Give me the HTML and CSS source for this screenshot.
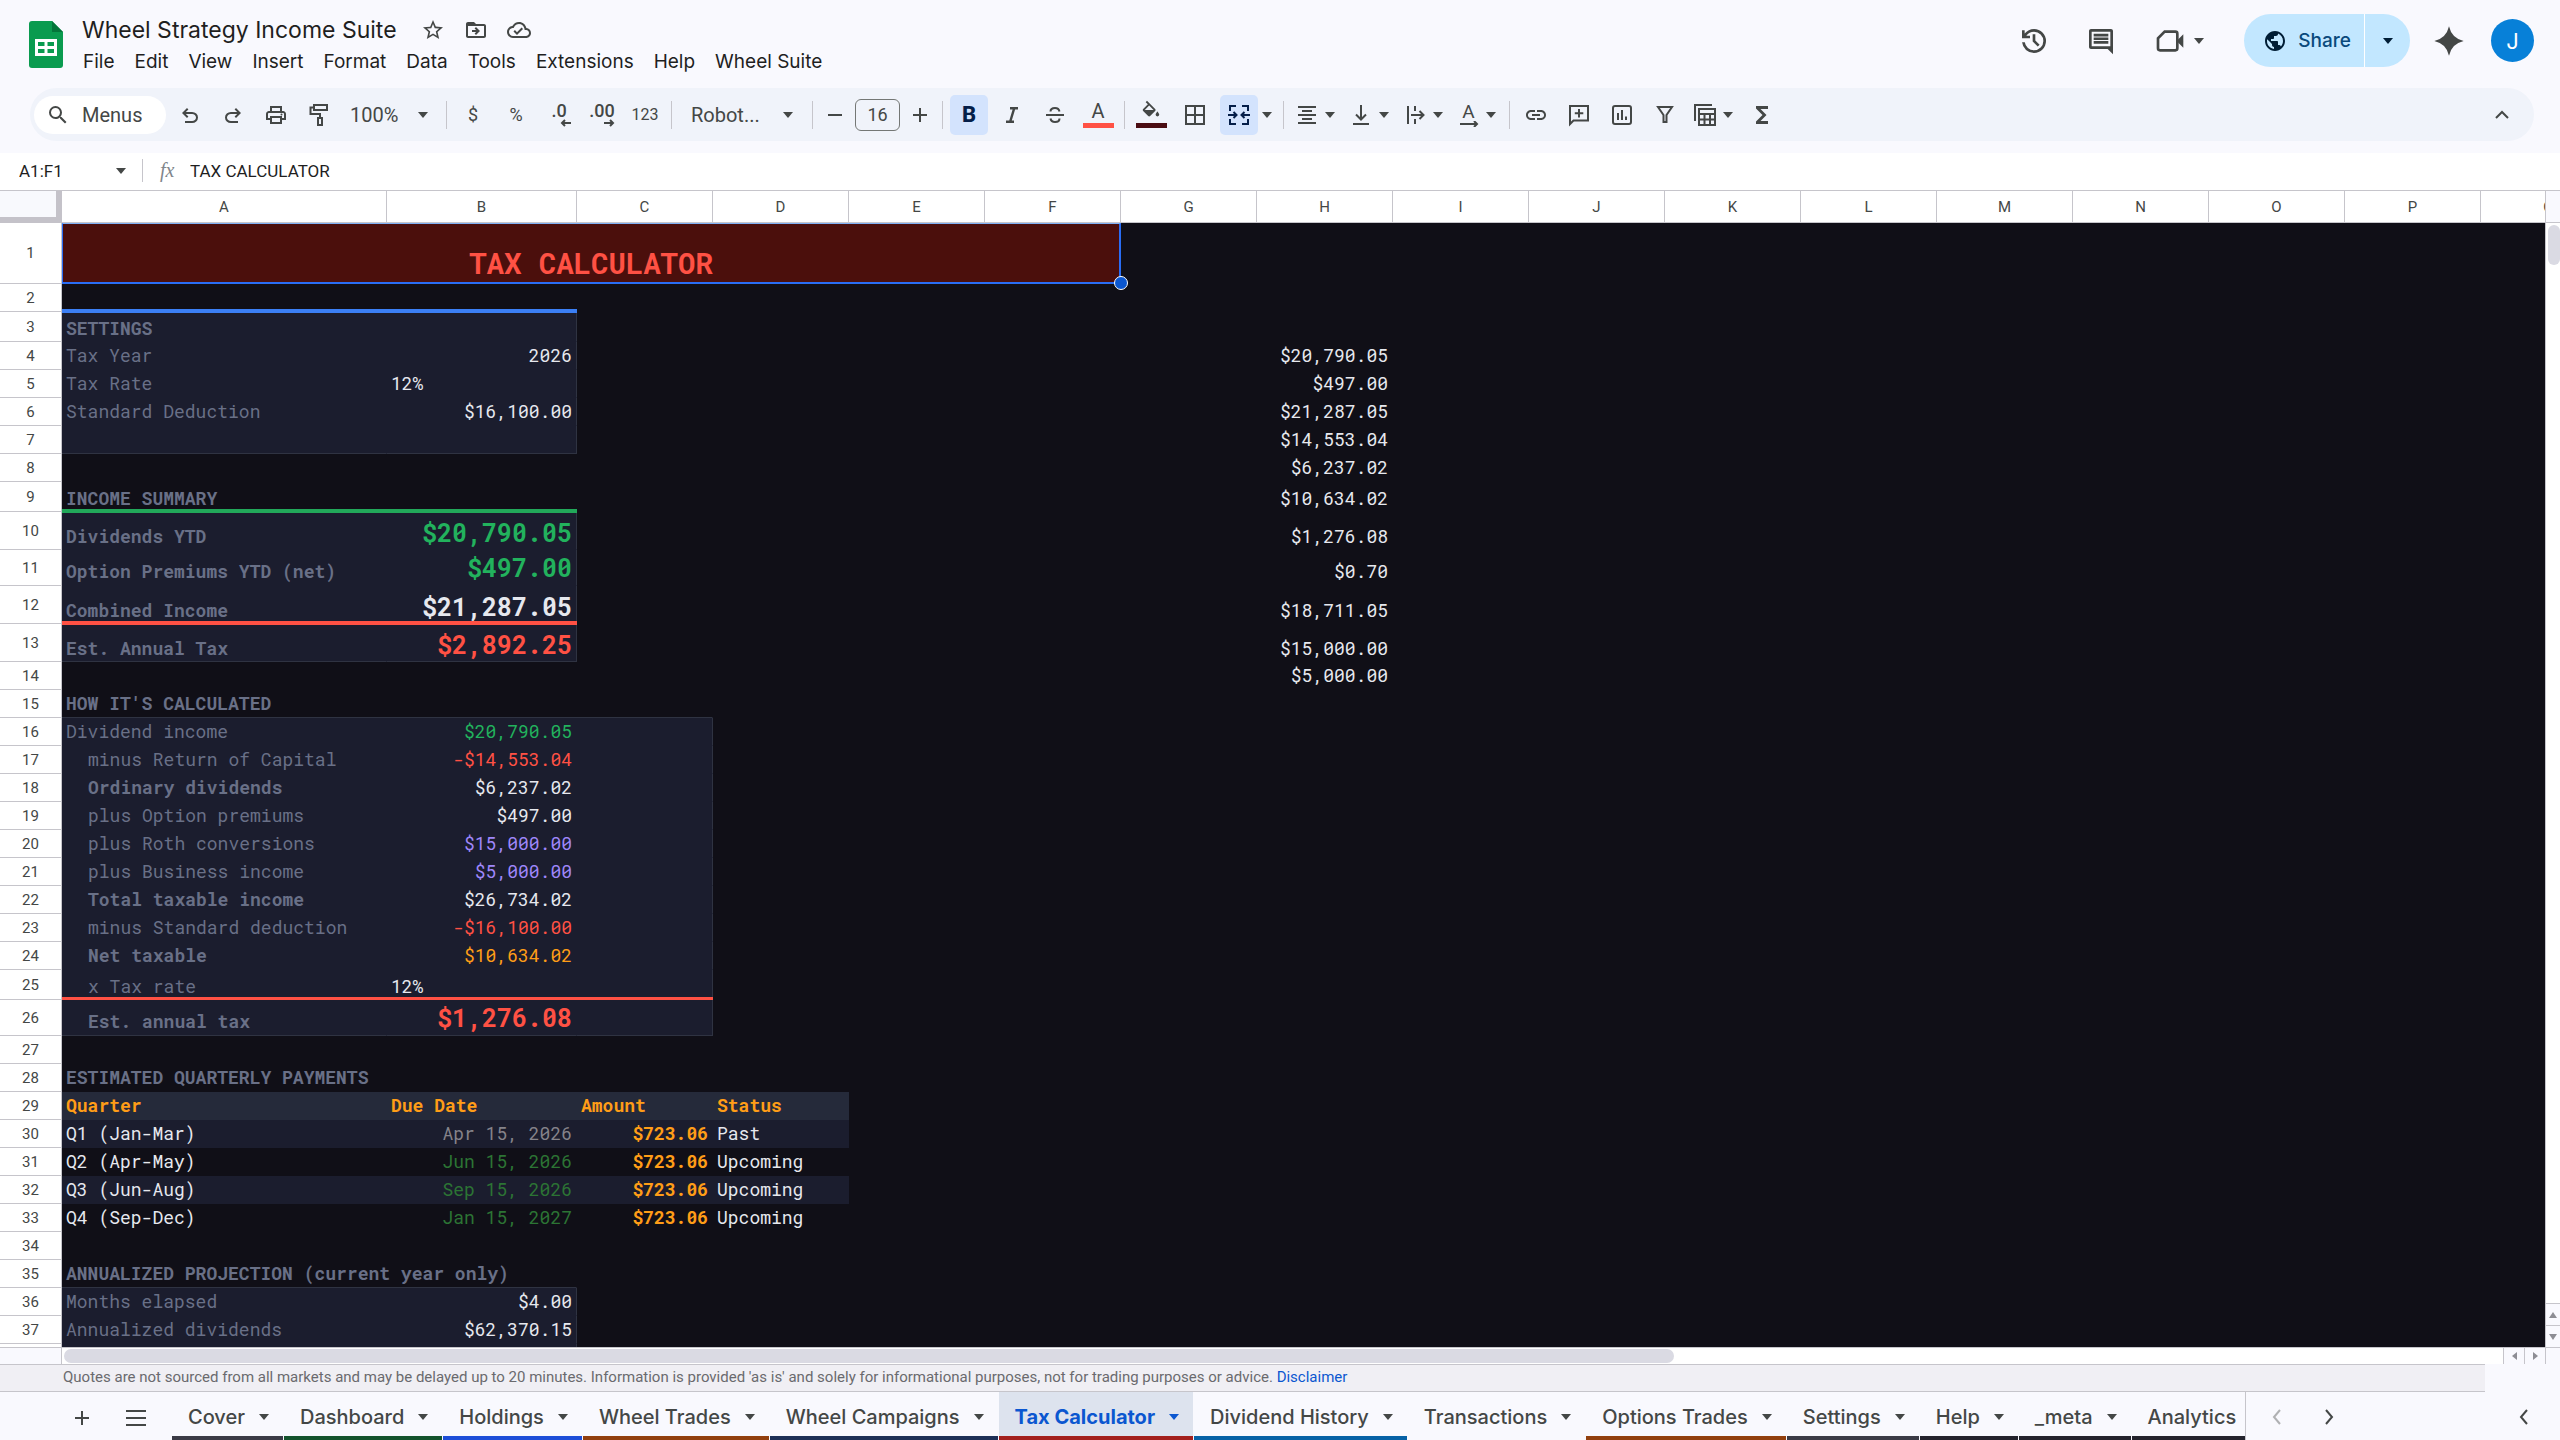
FILE: index.html
```html
<!DOCTYPE html>
<html lang="en">
<head>
<meta charset="utf-8">
<meta name="viewport" content="width=device-width, initial-scale=1">
<title>Wheel Strategy Income Suite</title>
<link rel="stylesheet" href="styles.css">
</head>
<body>
<header class="topbar">
  <svg class="logo" viewBox="0 0 34 47" aria-hidden="true"><path fill="#0a9b4f" d="M3 0h20l11 11v33a3 3 0 0 1-3 3H3a3 3 0 0 1-3-3V3a3 3 0 0 1 3-3z"/><path fill="#04753a" d="M23 0l11 11H23z"/><path fill="#fff" fill-rule="evenodd" d="M6 18h22v17H6zM9 21v4h6.500v-4zm9.500 0v4H25v-4zM9 28v4h6.500v-4zm9.500 0v4H25v-4z"/></svg>
  <div class="doc">
    <div class="doc-title">
      <h1>Wheel Strategy Income Suite</h1>
      <button class="mini" aria-label="Star"><svg viewBox="0 0 24 24"><path d="M22 9.240l-7.190-.620L12 2 9.190 8.630 2 9.240l5.460 4.730L5.820 21 12 17.270 18.180 21l-1.630-7.030L22 9.240zM12 15.400l-3.760 2.270 1-4.280-3.320-2.880 4.380-.380L12 6.100l1.710 4.040 4.380.380-3.320 2.880 1 4.280L12 15.400z"/></svg></button>
      <button class="mini" aria-label="Move"><svg viewBox="0 0 24 24"><path d="M20 6h-8l-2-2H4c-1.100 0-2 .9-2 2v12c0 1.100.9 2 2 2h16c1.100 0 2-.9 2-2V8c0-1.100-.9-2-2-2zm0 12H4V8h16v10z"/><path d="M12.160 12H8v2h4.160l-1.590 1.590L11.990 17 16 13.010 11.990 9l-1.410 1.410L12.160 12z"/></svg></button>
      <button class="mini" aria-label="Saved to Drive"><svg viewBox="0 0 24 24"><path d="M19.350 10.040C18.670 6.590 15.640 4 12 4 9.110 4 6.610 5.640 5.360 8.040 2.340 8.360 0 10.910 0 14c0 3.310 2.690 6 6 6h13c2.760 0 5-2.240 5-5 0-2.640-2.050-4.780-4.650-4.960zM19 18H6c-2.210 0-4-1.790-4-4 0-2.050 1.530-3.760 3.560-3.970l1.070-.11.5-.95C8.080 7.140 9.940 6 12 6c2.620 0 4.880 1.860 5.390 4.430l.3 1.500 1.530.110c1.560.1 2.780 1.410 2.780 2.960 0 1.650-1.350 3-3 3zm-9-3.820l-2.090-2.090L6.500 13.500 10 17l6.010-6.010-1.410-1.410z"/></svg></button>
    </div>
    <nav class="menus">
      <button>File</button><button>Edit</button><button>View</button><button>Insert</button><button>Format</button><button>Data</button><button>Tools</button><button>Extensions</button><button>Help</button><button>Wheel Suite</button>
    </nav>
  </div>
  <div class="actions">
    <button class="act" aria-label="Version history"><svg viewBox="0 0 24 24"><path d="M12 21q-3.450 0-6.012-2.287T3.050 13H5.100q.35 2.600 2.313 4.300T12 19q2.925 0 4.963-2.037T19 12t-2.037-4.962T12 5q-1.725 0-3.225.8T6.250 8H9v2H3V4h2v2.350q1.275-1.600 3.113-2.475T12 3q1.875 0 3.513.713t2.850 1.924 1.925 2.850T21 12t-.712 3.513-1.925 2.850-2.850 1.925T12 21m2.800-4.800L11 12.400V7h2v4.600l3.200 3.200z"/></svg></button>
    <button class="act" aria-label="Comments"><svg viewBox="0 0 24 24"><path d="M21 4.500c0-.8-.7-1.500-1.500-1.500h-15C3.700 3 3 3.700 3 4.500v12c0 .8.7 1.500 1.500 1.500H17l4 4zM19 5v11H5V5zM6.500 12h11v2h-11zm0-2.700h11v2h-11zm0-2.700h11v2h-11z"/></svg></button>
    <button class="act meet" aria-label="Meet"><svg viewBox="0 0 24 24"><path fill="none" stroke="currentColor" stroke-width="2" d="M8 5h8a1.500 1.500 0 0 1 1.500 1.500v11A1.500 1.500 0 0 1 16 19H4.500A1.500 1.500 0 0 1 3 17.500V10z"/><path d="M17.500 11.500L22 7v10l-4.500-4.500z"/></svg><i class="caret"></i></button>
    <div class="share">
      <button class="share-main"><svg viewBox="0 0 24 24"><path d="M12 2C6.480 2 2 6.480 2 12s4.480 10 10 10 10-4.480 10-10S17.520 2 12 2zm-1 17.930c-3.950-.49-7-3.850-7-7.930 0-.62.080-1.210.210-1.790L9 15v1c0 1.100.9 2 2 2v1.930zm6.900-2.540c-.26-.81-1-1.390-1.900-1.390h-1v-3c0-.55-.45-1-1-1H8v-2h2c.55 0 1-.45 1-1V7h2c1.100 0 2-.9 2-2v-.41c2.930 1.190 5 4.060 5 7.410 0 2.080-.8 3.970-2.100 5.390z"/></svg>Share</button>
      <button class="share-more" aria-label="Share options"><i class="caret"></i></button>
    </div>
    <button class="act spark" aria-label="Gemini"><svg viewBox="0 0 24 24"><path d="M12 1Q14 10 23 12 14 14 12 23 10 14 1 12 10 10 12 1z"/></svg></button>
    <button class="avatar">J</button>
  </div>
</header>

<div class="toolbar" role="toolbar">
  <label class="search"><svg viewBox="0 0 24 24"><path d="M15.500 14h-.79l-.28-.27A6.471 6.471 0 0 0 16 9.500 6.500 6.500 0 1 0 9.500 16c1.610 0 3.090-.59 4.230-1.570l.27.280v.79l5 4.990L20.490 19l-4.990-5zm-6 0C7.010 14 5 11.990 5 9.500S7.010 5 9.500 5 14 7.010 14 9.500 11.990 14 9.500 14z"/></svg><input type="text" placeholder="Menus" aria-label="Search menus"></label>
  <div class="group">
    <button aria-label="Undo"><svg viewBox="0 0 24 24"><path d="M7 20v-2h7.100q1.575 0 2.738-1T18 14.500 16.838 12 14.100 11H7.800l2.600 2.600L9 15l-5-5 5-5 1.400 1.400L7.800 9h6.300q2.425 0 4.163 1.575T20 14.500t-1.737 3.925T14.100 20z"/></svg></button>
    <button aria-label="Redo"><svg viewBox="0 0 24 24"><path d="M9.900 20q-2.425 0-4.163-1.575T4 14.500t1.737-3.925T9.900 9h6.300l-2.600-2.600L15 5l5 5-5 5-1.400-1.400 2.600-2.600H9.900q-1.575 0-2.738 1T6 14.500t1.163 2.500T9.900 18H17v2z"/></svg></button>
    <button aria-label="Print"><svg viewBox="0 0 24 24"><path d="M19 8h-1V3H6v5H5c-1.660 0-3 1.340-3 3v6h4v4h12v-4h4v-6c0-1.660-1.340-3-3-3zM8 5h8v3H8V5zm8 12v2H8v-4h8v2zm2-2v-2H6v2H4v-4c0-.55.45-1 1-1h14c.55 0 1 .45 1 1v4h-2z"/><circle cx="17.500" cy="11.500" r="1"/></svg></button>
    <button aria-label="Paint format"><svg class="line" viewBox="0 0 24 24"><path d="M7 2h13v5H7zM7 4.500H3.500V11H13v4M11 15h4v7h-4z"/></svg></button>
  </div>
  <label class="pick zoom"><select aria-label="Zoom"><option>100%</option></select><i class="caret"></i></label>
  <span class="sep"></span>
  <div class="group">
    <button class="txt" aria-label="Currency">$</button>
    <button class="txt" aria-label="Percent">%</button>
    <button class="txt dec" aria-label="Decrease decimals">.0<svg class="line" viewBox="0 0 12 8"><path d="M11 4H2M5 1L2 4l3 3"/></svg></button>
    <button class="txt dec" aria-label="Increase decimals">.00<svg class="line" viewBox="0 0 12 8"><path d="M1 4h9M7 1l3 3-3 3"/></svg></button>
    <button class="txt small" aria-label="More formats">123</button>
  </div>
  <span class="sep"></span>
  <label class="pick font"><select aria-label="Font"><option>Robot...</option></select><i class="caret"></i></label>
  <span class="sep"></span>
  <div class="group">
    <button class="step" aria-label="Smaller"><svg viewBox="0 0 24 24"><path d="M5 11h14v2H5z"/></svg></button>
    <input class="size" type="text" value="16" aria-label="Font size">
    <button class="step" aria-label="Larger"><svg viewBox="0 0 24 24"><path d="M19 13h-6v6h-2v-6H5v-2h6V5h2v6h6z"/></svg></button>
  </div>
  <span class="sep"></span>
  <div class="group">
    <button class="txt bold on" aria-label="Bold">B</button>
    <button aria-label="Italic"><svg viewBox="0 0 24 24"><path d="M10 4v2.500h2.600l-3.300 11H6V20h8v-2.500h-2.200l3.300-11H18V4z"/></svg></button>
    <button aria-label="Strikethrough"><svg class="line" viewBox="0 0 24 24"><path d="M3 12h18M16.500 8.500C16 6 14 5 12 5S7.500 6 7.500 8.500M7.500 15.500C8 18 10 19 12 19s4.500-1 4.500-3.500"/></svg></button>
    <button class="swatch red" aria-label="Text color">A</button>
  </div>
  <span class="sep"></span>
  <div class="group wide">
    <button class="swatch maroon" aria-label="Fill color"><svg viewBox="0 0 24 24"><path d="M16.560 10.940L7.620 2 6.210 3.410l2.380 2.380-5.150 5.150c-.59.59-.59 1.540 0 2.120l5.500 5.500c.29.290.68.440 1.060.440s.77-.15 1.060-.44l5.500-5.500c.59-.58.59-1.530 0-2.120zM19 13.500s-2 2.170-2 3.500a2 2 0 0 0 4 0c0-1.330-2-3.500-2-3.500zM10 7.210L5.210 12h9.580z" fill-rule="evenodd"/></svg></button>
    <button aria-label="Borders"><svg viewBox="0 0 24 24"><path d="M2 2v20h20V2zm9 18H4v-7h7zm0-9H4V4h7zm9 9h-7v-7h7zm0-9h-7V4h7z"/></svg></button>
    <button class="on" aria-label="Merge cells"><svg class="line" viewBox="0 0 24 24"><path d="M9 3H3v5M3 16v5h6M15 3h6v5M21 16v5h-6M1 12h8M6.500 9l3 3-3 3M23 12h-8M17.500 9l-3 3 3 3"/></svg></button>
  </div>
  <button class="only-caret" aria-label="Merge type"><i class="caret"></i></button>
  <span class="sep"></span>
  <div class="group">
    <button class="drop" aria-label="Horizontal align"><svg class="line" viewBox="0 0 24 24"><path d="M3 4h18M7 8h10M3 12h18M7 16h10M3 20h18"/></svg><i class="caret"></i></button>
    <button class="drop" aria-label="Vertical align"><svg class="line" viewBox="0 0 24 24"><path d="M12 2v14M7 11.500l5 5 5-5M4 21h16"/></svg><i class="caret"></i></button>
    <button class="drop" aria-label="Text wrapping"><svg class="line" viewBox="0 0 24 24"><path d="M5 3v18M12 3v5M12 16v5M8 12h12M16.500 8l4 4-4 4"/></svg><i class="caret"></i></button>
    <button class="drop rotate" aria-label="Text rotation"><span>A<svg class="line" viewBox="0 0 20 6"><path d="M1 3h17M15 0l3 3-3 3"/></svg></span><i class="caret"></i></button>
  </div>
  <span class="sep"></span>
  <div class="group">
    <button aria-label="Link"><svg viewBox="0 0 24 24"><path d="M3.900 12c0-1.710 1.390-3.100 3.100-3.100h4V7H7c-2.760 0-5 2.240-5 5s2.240 5 5 5h4v-1.900H7c-1.710 0-3.100-1.390-3.100-3.100zM8 13h8v-2H8v2zm9-6h-4v1.900h4c1.710 0 3.100 1.390 3.100 3.100s-1.390 3.100-3.100 3.100h-4V17h4c2.760 0 5-2.240 5-5s-2.240-5-5-5z"/></svg></button>
    <button aria-label="Insert comment"><svg class="line" viewBox="0 0 24 24"><path d="M3 21V3h18v14.500H6.500zM12 6v8.500M7.800 10.200h8.500"/></svg></button>
    <button aria-label="Insert chart"><svg class="line" viewBox="0 0 24 24"><path d="M5 3h14a2 2 0 0 1 2 2v14a2 2 0 0 1-2 2H5a2 2 0 0 1-2-2V5a2 2 0 0 1 2-2zM8 10v7M12 7v10M16 13.500V17"/></svg></button>
    <button aria-label="Filter"><svg class="line" viewBox="0 0 24 24"><path d="M5 4h14l-5.500 8v7h-3v-7z"/></svg></button>
    <button class="drop" aria-label="Table views"><svg class="line" viewBox="0 0 24 24"><path d="M6 6h16v16H6zM6 11h16M6 16.500h16M11.500 11v11M17 11v11M2 18V2h17"/></svg><i class="caret"></i></button>
    <button aria-label="Functions"><svg viewBox="0 0 24 24"><path d="M18 3H6v2.500l6.500 6.500L6 18.500V21h12v-3h-7.500l6-6-6-6H18z"/></svg></button>
  </div>
  <button class="collapse" aria-label="Hide menus"><svg class="line" viewBox="0 0 24 24"><path d="M6 15l6-6 6 6"/></svg></button>
</div>

<div class="formula">
  <input class="name" type="text" value="A1:F1" aria-label="Name box">
  <button class="name-more" aria-label="Named ranges"><i class="caret"></i></button>
  <span class="sep"></span>
  <span class="fx">fx</span>
  <input class="fbox" type="text" value="TAX CALCULATOR" aria-label="Formula">
</div>

<main class="sheet">
  <div class="canvas">
  <table class="grid">
    <thead>
      <tr><th class="corner"></th><th class="wa">A</th><th class="wb">B</th><th>C</th><th>D</th><th>E</th><th>F</th><th>G</th><th>H</th><th>I</th><th>J</th><th>K</th><th>L</th><th>M</th><th>N</th><th>O</th><th>P</th><th>Q</th></tr>
    </thead>
    <tbody>
      <tr class="h-title"><th>1</th><td class="title" colspan="6">TAX CALCULATOR<span class="handle"></span></td><td colspan="11"></td></tr>
      <tr><th>2</th><td class="rule blue" colspan="2"></td><td colspan="15"></td></tr>
      <tr class="h-rule"><th>3</th><td class="p head after blue">SETTINGS</td><td class="p er after blue"></td><td colspan="15"></td></tr>
      <tr><th>4</th><td class="p lab">Tax Year</td><td class="p er num">2026</td><td colspan="5"></td><td class="num">$20,790.05</td><td colspan="9"></td></tr>
      <tr><th>5</th><td class="p lab">Tax Rate</td><td class="p er">12%</td><td colspan="5"></td><td class="num">$497.00</td><td colspan="9"></td></tr>
      <tr><th>6</th><td class="p lab">Standard Deduction</td><td class="p er num">$16,100.00</td><td colspan="5"></td><td class="num">$21,287.05</td><td colspan="9"></td></tr>
      <tr><th>7</th><td class="p eb"></td><td class="p er eb"></td><td colspan="5"></td><td class="num">$14,553.04</td><td colspan="9"></td></tr>
      <tr><th>8</th><td colspan="7"></td><td class="num">$6,237.02</td><td colspan="9"></td></tr>
      <tr class="h-rule"><th>9</th><td class="head rule green" colspan="2">INCOME SUMMARY</td><td colspan="5"></td><td class="num">$10,634.02</td><td colspan="9"></td></tr>
      <tr class="h-tall"><th>10</th><td class="p head after green">Dividends YTD</td><td class="p er num big c-green after green">$20,790.05</td><td colspan="5"></td><td class="num">$1,276.08</td><td colspan="9"></td></tr>
      <tr class="h-mid"><th>11</th><td class="p head">Option Premiums YTD (net)</td><td class="p er num big c-green">$497.00</td><td colspan="5"></td><td class="num">$0.70</td><td colspan="9"></td></tr>
      <tr class="h-tall"><th>12</th><td class="p head rule red">Combined Income</td><td class="p er num big rule red">$21,287.05</td><td colspan="5"></td><td class="num">$18,711.05</td><td colspan="9"></td></tr>
      <tr class="h-tall"><th>13</th><td class="p head eb after red">Est. Annual Tax</td><td class="p er eb num big c-red after red">$2,892.25</td><td colspan="5"></td><td class="num">$15,000.00</td><td colspan="9"></td></tr>
      <tr><th>14</th><td colspan="7"></td><td class="num">$5,000.00</td><td colspan="9"></td></tr>
      <tr><th>15</th><td class="head eb" colspan="3">HOW IT'S CALCULATED</td><td colspan="14"></td></tr>
      <tr><th>16</th><td class="p lab">Dividend income</td><td class="p num c-green">$20,790.05</td><td class="p er"></td><td colspan="14"></td></tr>
      <tr><th>17</th><td class="p lab in">minus Return of Capital</td><td class="p num c-red">-$14,553.04</td><td class="p er"></td><td colspan="14"></td></tr>
      <tr><th>18</th><td class="p head in">Ordinary dividends</td><td class="p num">$6,237.02</td><td class="p er"></td><td colspan="14"></td></tr>
      <tr><th>19</th><td class="p lab in">plus Option premiums</td><td class="p num">$497.00</td><td class="p er"></td><td colspan="14"></td></tr>
      <tr><th>20</th><td class="p lab in">plus Roth conversions</td><td class="p num c-purple">$15,000.00</td><td class="p er"></td><td colspan="14"></td></tr>
      <tr><th>21</th><td class="p lab in">plus Business income</td><td class="p num c-purple">$5,000.00</td><td class="p er"></td><td colspan="14"></td></tr>
      <tr><th>22</th><td class="p head in">Total taxable income</td><td class="p num">$26,734.02</td><td class="p er"></td><td colspan="14"></td></tr>
      <tr><th>23</th><td class="p lab in">minus Standard deduction</td><td class="p num c-red">-$16,100.00</td><td class="p er"></td><td colspan="14"></td></tr>
      <tr><th>24</th><td class="p head in">Net taxable</td><td class="p num c-orange">$10,634.02</td><td class="p er"></td><td colspan="14"></td></tr>
      <tr class="h-rule"><th>25</th><td class="p lab in rule red">x Tax rate</td><td class="p rule red">12%</td><td class="p er rule red"></td><td colspan="14"></td></tr>
      <tr class="h-mid"><th>26</th><td class="p head in eb">Est. annual tax</td><td class="p eb num big c-red">$1,276.08</td><td class="p er eb"></td><td colspan="14"></td></tr>
      <tr><th>27</th><td colspan="17"></td></tr>
      <tr><th>28</th><td class="head" colspan="2">ESTIMATED QUARTERLY PAYMENTS</td><td colspan="15"></td></tr>
      <tr class="qhead"><th>29</th><td>Quarter</td><td>Due Date</td><td>Amount</td><td>Status</td><td class="bare" colspan="13"></td></tr>
      <tr><th>30</th><td class="p">Q1 (Jan-Mar)</td><td class="p num c-past">Apr 15, 2026</td><td class="p num pay">$723.06</td><td class="p">Past</td><td colspan="13"></td></tr>
      <tr><th>31</th><td>Q2 (Apr-May)</td><td class="num c-next">Jun 15, 2026</td><td class="num pay">$723.06</td><td>Upcoming</td><td colspan="13"></td></tr>
      <tr><th>32</th><td class="p">Q3 (Jun-Aug)</td><td class="p num c-next">Sep 15, 2026</td><td class="p num pay">$723.06</td><td class="p">Upcoming</td><td colspan="13"></td></tr>
      <tr><th>33</th><td>Q4 (Sep-Dec)</td><td class="num c-next">Jan 15, 2027</td><td class="num pay">$723.06</td><td>Upcoming</td><td colspan="13"></td></tr>
      <tr><th>34</th><td colspan="17"></td></tr>
      <tr><th>35</th><td class="head eb" colspan="2">ANNUALIZED PROJECTION (current year only)</td><td colspan="15"></td></tr>
      <tr><th>36</th><td class="p lab">Months elapsed</td><td class="p er num">$4.00</td><td colspan="15"></td></tr>
      <tr><th>37</th><td class="p lab">Annualized dividends</td><td class="p er num">$62,370.15</td><td colspan="15"></td></tr>
      <tr><th></th><td class="p"></td><td class="p er"></td><td colspan="15"></td></tr>
    </tbody>
  </table>
  </div>
  <div class="vscroll">
    <div class="vhead"></div>
    <div class="vtrack"><div class="vthumb"></div></div>
    <button aria-label="Scroll up"><i class="tri up"></i></button>
    <button aria-label="Scroll down"><i class="tri down"></i></button>
  </div>
</main>
<div class="hscroll">
  <div class="hpad"></div>
  <div class="htrack"><div class="hthumb"></div></div>
  <button aria-label="Scroll left"><i class="tri left"></i></button>
  <button aria-label="Scroll right"><i class="tri right"></i></button>
  <div class="hend"></div>
</div>
<p class="notice">Quotes are not sourced from all markets and may be delayed up to 20 minutes. Information is provided 'as is' and solely for informational purposes, not for trading purposes or advice. <a href="#">Disclaimer</a></p>

<footer class="tabs">
  <button class="tool" aria-label="Add sheet"><svg viewBox="0 0 24 24"><path d="M19 13h-6v6h-2v-6H5v-2h6V5h2v6h6z"/></svg></button>
  <button class="tool" aria-label="All sheets"><svg viewBox="0 0 24 24"><path d="M2 4h20v2H2zm0 7h20v2H2zm0 7h20v2H2z"/></svg></button>
  <nav class="tablist">
    <button class="t-slate">Cover<i class="caret"></i></button>
    <button class="t-green">Dashboard<i class="caret"></i></button>
    <button class="t-blue">Holdings<i class="caret"></i></button>
    <button class="t-brown">Wheel Trades<i class="caret"></i></button>
    <button class="t-navy">Wheel Campaigns<i class="caret"></i></button>
    <button class="t-red active">Tax Calculator<i class="caret"></i></button>
    <button class="t-sky">Dividend History<i class="caret"></i></button>
    <button>Transactions<i class="caret"></i></button>
    <button class="t-brown">Options Trades<i class="caret"></i></button>
    <button class="t-slate">Settings<i class="caret"></i></button>
    <button class="t-dark">Help<i class="caret"></i></button>
    <button class="t-dark">_meta<i class="caret"></i></button>
    <button class="t-dark last">Analytics</button>
  </nav>
  <button class="arrow off" aria-label="Previous tabs"><svg class="line" viewBox="0 0 24 24"><path d="M15 5l-6 7 6 7"/></svg></button>
  <button class="arrow" aria-label="Next tabs"><svg class="line" viewBox="0 0 24 24"><path d="M9 5l6 7-6 7"/></svg></button>
  <button class="arrow side" aria-label="Show side panel"><svg class="line" viewBox="0 0 24 24"><path d="M15 5l-6 7 6 7"/></svg></button>
</footer>
</body>
</html>
```
FILE: styles.css
```css
:root {
  --ui: Inter, Roboto, sans-serif;
  --text: Roboto, "Liberation Sans", sans-serif;
  --mono: "Roboto Mono", "DejaVu Sans Mono", monospace;
  --ink: #444746;
  --line: #c6c5cb;
  --chrome: #f9f9fe;
  --panel: #1b1d2e;
  --edge: #2f3342;
  --muted: #697087;
  --green: #22b25d;
  --red: #ff5144;
  --orange: #ff9d17;
}

* { box-sizing: border-box; }

body {
  margin: 0;
  height: 100vh;
  display: flex;
  flex-direction: column;
  overflow: hidden;
  background: var(--chrome);
  color: var(--ink);
  font-family: var(--text);
}

button, input, select {
  font: inherit;
  color: inherit;
  background: none;
  border: 0;
  padding: 0;
  margin: 0;
  outline: 0;
}

button {
  display: flex;
  align-items: center;
  justify-content: center;
  flex: none;
}

svg { display: block; flex: none; fill: currentColor; width: 24px; height: 24px; }
svg.line { fill: none; stroke: currentColor; stroke-width: 2; }

.caret {
  flex: none;
  border: 5px solid transparent;
  border-top: 6px solid currentColor;
  border-bottom: 0;
}

.sep { flex: none; width: 1px; height: 28px; margin: 0 7px; background: var(--line); }

/* Title bar */
.topbar { display: flex; height: 88px; flex: none; padding: 0 26px 0 29px; font-family: var(--ui); }
.logo { width: 34px; height: 47px; margin: 21px 17px 0 0; }
.doc { padding-top: 13px; }
.doc-title { display: flex; align-items: center; height: 34px; padding-left: 2px; }
.doc-title h1 { margin: 0 23px 0 0; font-size: 23px; font-weight: 400; line-height: 32px; color: #1f1f1f; white-space: nowrap; }
.mini { width: 26px; margin-right: 17px; }
.menus { display: flex; gap: 20px; margin-top: 1px; padding-left: 3px; }
.menus button { height: 26px; font-size: 19px; color: #1f1f1f; }
.actions { display: flex; align-items: center; margin-left: auto; height: 81px; }
.act { width: 40px; height: 40px; }
.act svg { width: 32px; height: 32px; }
.act + .act { margin-left: 27px; }
.meet { width: 62px; gap: 8px; }
.share { display: flex; height: 53px; margin-left: 34px; border-radius: 27px; overflow: hidden; background: #c2e7ff; color: #001d35; }
.share-main { width: 121px; gap: 11px; padding-left: 6px; font-size: 19px; font-weight: 500; border-right: 1px solid #fff; color: #0a4a7c; }
.share-main svg { color: #001d35; }
.share-more { width: 45px; }
.spark { margin-left: 19px; }
.avatar { width: 43px; height: 43px; margin-left: 22px; border-radius: 50%; background: #0780d8; color: #fff; font-size: 22px; }

/* Toolbar */
.toolbar {
  display: flex;
  align-items: center;
  flex: none;
  height: 53px;
  margin: 0 26px 12px 30px;
  padding: 0 15px 0 4px;
  border-radius: 27px;
  background: #f0f3fa;
}
.search { display: flex; align-items: center; width: 132px; height: 38px; margin-right: 5px; padding-left: 12px; gap: 12px; border-radius: 19px; background: #fff; }
.search input { width: 80px; font-size: 20px; font-family: var(--text); }
.search input::placeholder { color: var(--ink); opacity: 1; }
.group { display: flex; align-items: center; gap: 5px; }
.group.wide { gap: 6px; }
.group button { width: 38px; height: 40px; border-radius: 5px; }
.group .step { width: 30px; }
.group .drop { width: 49px; gap: 6px; padding-right: 2px; }
.group .on { background: #d3e3fd; color: #041e49; }
.txt { font-size: 18px; }
.bold { font-size: 22px; font-weight: 800; }
.group .small { font-size: 16px; }
.group .dec { flex-direction: column; align-items: center; gap: 0; line-height: 16px; font-weight: 500; }
.dec svg { width: 12px; height: 8px; align-self: flex-end; margin-right: 6px; }
.swatch { flex-direction: column; justify-content: flex-end; font-size: 20px; line-height: 20px; }
.group .swatch { padding-bottom: 7px; }
.swatch::after { content: ""; width: 31px; height: 5px; margin-top: 2px; }
.swatch svg { width: 24px; height: 22px; }
.red.swatch::after { background: #ff5144; }
.maroon.swatch::after { background: #4a0c12; }
.rotate span { display: flex; flex-direction: column; align-items: center; width: 22px; font-size: 19px; line-height: 18px; }
.rotate svg { width: 20px; height: 6px; }
.size { width: 45px; height: 32px; border: 1px solid #747775; border-radius: 6px; text-align: center; font-size: 18px; }
.only-caret { width: 18px; height: 40px; }
.pick { display: flex; align-items: center; }
.pick select { appearance: none; font-size: 20px; }
.zoom { width: 101px; padding-left: 12px; }
.zoom select { width: 68px; }
.font { width: 126px; padding-left: 12px; }
.font select { width: 92px; }
.collapse { width: 34px; height: 34px; margin-left: auto; }

/* Formula bar */
.formula { display: flex; align-items: center; flex: none; height: 38px; padding: 0 0 2px 19px; background: #fff; border-bottom: 1px solid var(--line); color: #1f1f1f; }
.name { width: 90px; font-size: 17px; }
.name-more { width: 24px; height: 28px; color: var(--ink); }
.formula .sep { margin: 0 17px 0 9px; height: 23px; }
.fx { width: 30px; font: italic 20px "Liberation Serif", serif; color: #80868b; }
.fbox { flex: 1; font-size: 17px; }

/* Grid */
.sheet { flex: 1; min-height: 0; display: flex; background: #100f17; }
.canvas { flex: 1; min-width: 0; overflow: hidden; }
.grid { border-collapse: separate; border-spacing: 0; }
.grid tr { height: 28px; }
.grid thead tr { height: 32px; }
.grid .h-rule { height: 30px; }
.grid .h-mid { height: 36px; }
.grid .h-tall { height: 38px; }
.grid .h-title { height: 61px; }
.grid th {
  min-width: 136px;
  padding: 0;
  background: #fff;
  border: 0 solid var(--line);
  border-width: 0 1px 1px 0;
  font-size: 15px;
  font-weight: 400;
  line-height: 20px;
  text-align: center;
}
.grid tbody th { min-width: 62px; }
.grid .wa { min-width: 325px; }
.grid .wb { min-width: 190px; }
.grid .corner { min-width: 62px; background: #f8f9fd; border-width: 0 6px 6px 0; border-color: #c4c2c9; }

.grid td {
  position: relative;
  padding: 0 4px 2px 4px;
  border: 0 solid transparent;
  border-width: 0 1px 1px 0;
  vertical-align: bottom;
  white-space: nowrap;
  font-family: var(--mono);
  font-size: 18px;
  line-height: 24px;
  color: #e6e8ee;
}
.grid .num { text-align: right; }
.grid .p { background: var(--panel); }
.grid .er { border-right-color: var(--edge); }
.grid .eb { border-bottom-color: var(--edge); }
.grid .lab { color: var(--muted); }
.grid .head { color: var(--muted); font-weight: 700; }
.grid .in { padding-left: 26px; }
.grid .h-rule td, .grid .h-tall td { padding-bottom: 1px; }
.grid .big { font-size: 25px; font-weight: 700; line-height: 28px; padding-bottom: 3px; }
.grid .h-tall .big { padding-bottom: 2px; }
.grid .c-green { color: var(--green); }
.grid .c-red { color: var(--red); }
.grid .c-orange { color: var(--orange); }
.grid .c-purple { color: #9f87fa; }
.grid .c-past { color: #85838a; }
.grid .c-next { color: #2c7434; }
.grid .pay { color: var(--orange); font-weight: 700; }
.grid .qhead td { background: #252a3a; color: var(--orange); font-weight: 700; }
.grid .qhead .bare { background: none; }

/* Coloured rules straddle the line between two rows */
.blue { --rule: #3b7ff5; }
.green { --rule: #22a85a; }
.red { --rule: #ff5144; }
.rule::after, .after::before { content: ""; position: absolute; left: 0; right: -1px; background: var(--rule); }
.rule::after { bottom: -1px; height: 3px; }
.after::before { top: 0; height: 1px; }

.grid .title {
  padding-bottom: 3px;
  background: #4b0f0c;
  color: var(--red);
  font-size: 29px;
  font-weight: 700;
  line-height: 32px;
  text-align: center;
  border: solid #2a6df4;
  border-width: 1px 2px 2px 1px;
  border-top-color: #7fb0f5;
  z-index: 1;
}
.handle { position: absolute; right: -9px; bottom: -8px; width: 14px; height: 14px; border-radius: 50%; border: 1px solid #fff; background: #0b57d0; }

/* Scrollbars */
.vscroll { display: flex; flex-direction: column; flex: none; width: 15px; background: #fff; border-left: 1px solid var(--line); }
.vhead { height: 32px; background: var(--chrome); border-bottom: 1px solid var(--line); }
.vtrack { flex: 1; padding: 2px 0 0 2px; }
.vthumb { height: 40px; border-radius: 7px; background: #dadae3; }
.vscroll button { height: 22px; border-top: 1px solid var(--line); background: var(--chrome); color: #8d8d94; }
.hscroll { display: flex; flex: none; height: 17px; border-top: 1px solid var(--line); background: #fff; }
.hpad { width: 62px; background: var(--chrome); border-right: 1px solid var(--line); }
.htrack { flex: 1; padding: 1px 0 0 2px; }
.hthumb { width: 66%; height: 14px; border-radius: 7px; background: #dadae3; }
.hscroll button { width: 21px; border-left: 1px solid var(--line); background: var(--chrome); color: #8d8d94; }
.hend { width: 15px; background: var(--chrome); border-left: 1px solid var(--line); }
.tri { border: 4px solid transparent; }
.tri.up { border-top: 0; border-bottom: 6px solid; }
.tri.down { border-bottom: 0; border-top: 6px solid; }
.tri.left { border-left: 0; border-right: 5px solid; }
.tri.right { border-right: 0; border-left: 5px solid; }

.notice {
  flex: none;
  height: 28px;
  margin: 0 75px 0 0;
  padding-left: 63px;
  background: #f0eff4;
  border-top: 1px solid var(--line);
  border-bottom: 1px solid var(--line);
  font-size: 15px;
  line-height: 25px;
  color: #6a6a6e;
  white-space: nowrap;
}
.notice a { color: #0b57d0; text-decoration: none; }

/* Sheet tabs */
.tabs { display: flex; flex: none; height: 48px; padding-left: 55px; font-family: var(--ui); }
.tool { width: 54px; padding-top: 3px; }
.tablist { display: flex; gap: 1px; margin-left: 9px; border-right: 1px solid var(--line); }
.tablist button {
  gap: 14px;
  padding: 5px 14px 0 16px;
  border-bottom: 4px solid transparent;
  font-size: 20px;
  font-weight: 500;
}
.tablist .last { padding-right: 9px; }
.tablist .active { background: #dde3ee; color: #0b57d0; font-weight: 700; }
.tablist .t-slate { border-color: #3b3b46; }
.tablist .t-green { border-color: #14532d; }
.tablist .t-blue { border-color: #1d4ed8; }
.tablist .t-brown { border-color: #92400e; }
.tablist .t-navy { border-color: #1e3057; }
.tablist .t-red { border-color: #a3201d; }
.tablist .t-sky { border-color: #0762a6; }
.tablist .t-dark { border-color: #24232d; }
.arrow { width: 52px; padding-top: 2px; }
.arrow.off { margin-left: 5px; opacity: .4; }
.arrow.side { width: 40px; margin-left: auto; margin-right: 16px; }
```
